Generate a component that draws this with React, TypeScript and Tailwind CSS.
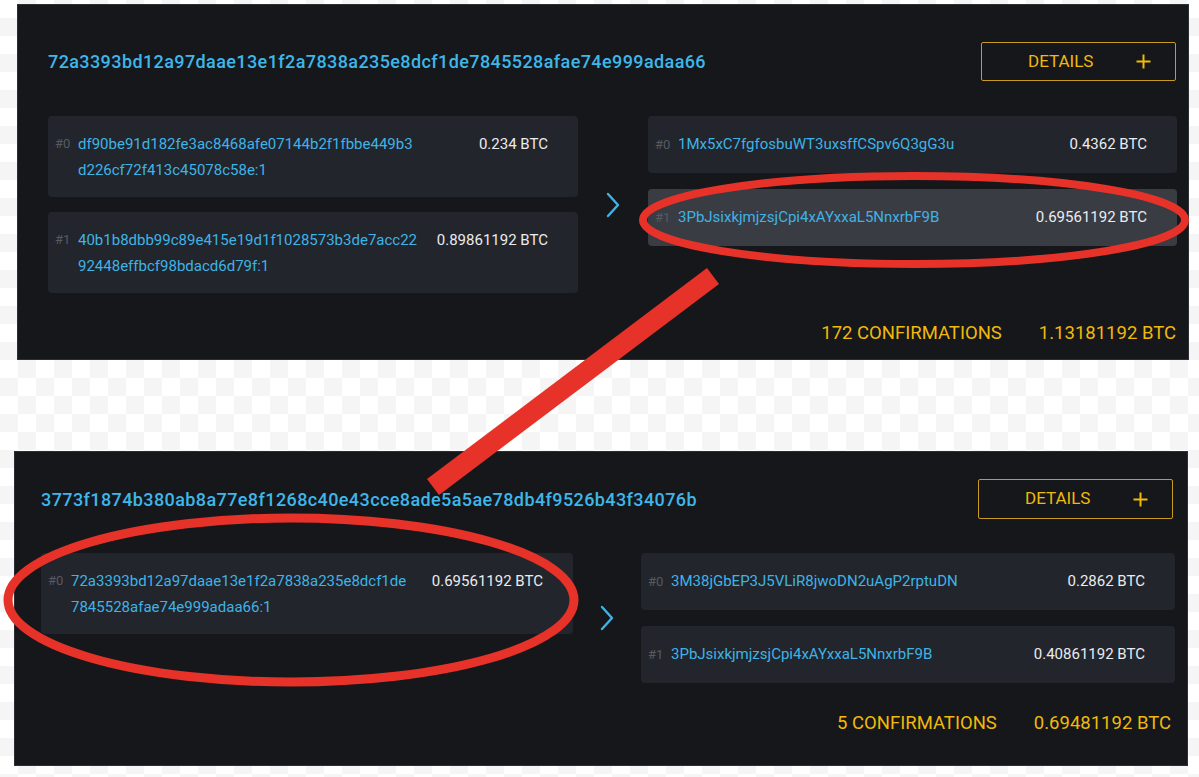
import React from 'react';

type Input = { idx: number; lines: string[]; amount: string };
type Output = { idx: number; addr: string; amount: string; highlight?: boolean };

type Tx = {
  hash: string;
  inputs: Input[];
  outputs: Output[];
  confirmations: string;
  total: string;
  panel: string;
  header: string;
  body: string;
  footer: string;
  cols: string;
};

const txs: Tx[] = [
  {
    hash: '72a3393bd12a97daae13e1f2a7838a235e8dcf1de7845528afae74e999adaa66',
    inputs: [
      { idx: 0, lines: ['df90be91d182fe3ac8468afe07144b2f1fbbe449b3', 'd226cf72f413c45078c58e:1'], amount: '0.234 BTC' },
      { idx: 1, lines: ['40b1b8dbb99c89e415e19d1f1028573b3de7acc22', '92448effbcf98bdacd6d79f:1'], amount: '0.89861192 BTC' },
    ],
    outputs: [
      { idx: 0, addr: '1Mx5xC7fgfosbuWT3uxsffCSpv6Q3gG3u', amount: '0.4362 BTC' },
      { idx: 1, addr: '3PbJsixkjmjzsjCpi4xAYxxaL5NnxrbF9B', amount: '0.69561192 BTC', highlight: true },
    ],
    confirmations: '172 CONFIRMATIONS',
    total: '1.13181192 BTC',
    panel: 'ml-[17px] mt-[4px] w-[1172px] h-[356px] pl-[30px] pr-[12px] pt-[37px]',
    header: 'h-[39px]',
    body: 'mt-[35px]',
    footer: 'mt-[28px] pr-0',
    cols: 'grid-cols-[530px_70px_529px]',
  },
  {
    hash: '3773f1874b380ab8a77e8f1268c40e43cce8ade5a5ae78db4f9526b43f34076b',
    inputs: [
      { idx: 0, lines: ['72a3393bd12a97daae13e1f2a7838a235e8dcf1de', '7845528afae74e999adaa66:1'], amount: '0.69561192 BTC' },
    ],
    outputs: [
      { idx: 0, addr: '3M38jGbEP3J5VLiR8jwoDN2uAgP2rptuDN', amount: '0.2862 BTC' },
      { idx: 1, addr: '3PbJsixkjmjzsjCpi4xAYxxaL5NnxrbF9B', amount: '0.40861192 BTC' },
    ],
    confirmations: '5 CONFIRMATIONS',
    total: '0.69481192 BTC',
    panel: 'ml-[14px] mt-[91px] w-[1174px] h-[315px] pl-[26px] pr-[14px] pt-[27px]',
    header: 'h-[40px]',
    body: 'mt-[34px]',
    footer: 'mt-[28px] pr-[2px]',
    cols: 'grid-cols-[532px_68px_534px]',
  },
];

const Chevron = () => (
  <svg width="16" height="26" viewBox="0 0 16 26" fill="none">
    <path d="M3 2 L13 13 L3 24" stroke="#3fb3e6" strokeWidth="2.4" strokeLinecap="round" strokeLinejoin="round" />
  </svg>
);

const Plus = () => (
  <svg width="15" height="15" viewBox="0 0 15 15" fill="none">
    <path d="M7.5 0.5 V14.5 M0.5 7.5 H14.5" stroke="#f0b90b" strokeWidth="2" />
  </svg>
);

const Panel: React.FC<{ tx: Tx }> = ({ tx }) => (
  <div className={`bg-[#15171b] border border-[#2b2e33] ${tx.panel}`}>
    <div className={`flex items-center justify-between ${tx.header}`}>
      <h2 className="text-[18px] font-medium text-[#3fb6e8] tracking-[0.4px]">{tx.hash}</h2>
      <button className="h-full w-[195px] flex items-center justify-between pl-[46px] pr-[24px] border border-[#c89a24] rounded-[2px] text-[17px] text-[#f0b90b]">
        <span>DETAILS</span>
        <Plus />
      </button>
    </div>

    <div className={`grid items-start ${tx.cols} ${tx.body}`}>
      <div className="flex flex-col gap-[15px]">
        {tx.inputs.map(inp => (
          <div key={inp.idx} className="bg-[#22252b] rounded-[4px] pl-[7px] pr-[30px] pt-[15px] pb-[14px] flex text-[15px] leading-[26px]">
            <span className="text-[#565b63] w-[23px] shrink-0 text-[13px]">#{inp.idx}</span>
            <div className="flex-1 text-[#3fb3e6]">
              {inp.lines.map(l => (
                <div key={l}>{l}</div>
              ))}
            </div>
            <span className="shrink-0 text-[#eaecef] ml-2">{inp.amount}</span>
          </div>
        ))}
      </div>

      <div className="flex justify-center items-center self-stretch">
        <Chevron />
      </div>

      <div className="flex flex-col gap-[16px]">
        {tx.outputs.map(out => (
          <div
            key={out.idx}
            className={`h-[57px] rounded-[4px] pl-[7px] pr-[30px] flex items-center text-[15px] ${out.highlight ? 'bg-[#393c43]' : 'bg-[#22252b]'}`}
          >
            <span className="text-[#565b63] w-[23px] shrink-0 text-[13px]">#{out.idx}</span>
            <span className="flex-1 text-[#3fb3e6]">{out.addr}</span>
            <span className="shrink-0 text-[#eaecef]">{out.amount}</span>
          </div>
        ))}
      </div>
    </div>

    <div className={`flex justify-end gap-[37px] text-[18.5px] leading-[24px] text-[#f0b90b] ${tx.footer}`}>
      <span>{tx.confirmations}</span>
      <span>{tx.total}</span>
    </div>
  </div>
);

export default function App() {
  return (
    <div
      className="relative w-[1199px] h-[777px] overflow-hidden flex flex-col bg-white bg-[repeating-conic-gradient(#f5f5f5_0_25%,#ffffff_0_50%)] bg-[length:36px_36px]"
      style={{ fontFamily: 'Roboto, "Noto Sans", sans-serif' }}
    >
      {txs.map(tx => (
        <Panel key={tx.hash} tx={tx} />
      ))}

      {/* red annotations drawn over the screenshot */}
      <svg className="absolute inset-0 pointer-events-none" width="1199" height="777" viewBox="0 0 1199 777" fill="none">
        <ellipse cx="914" cy="220" rx="271" ry="44" stroke="#e63228" strokeWidth="8" />
        <ellipse cx="291" cy="600" rx="283" ry="82" stroke="#e63228" strokeWidth="9" />
        <line x1="713" y1="276" x2="433" y2="487" stroke="#e63228" strokeWidth="20" />
      </svg>
    </div>
  );
}
